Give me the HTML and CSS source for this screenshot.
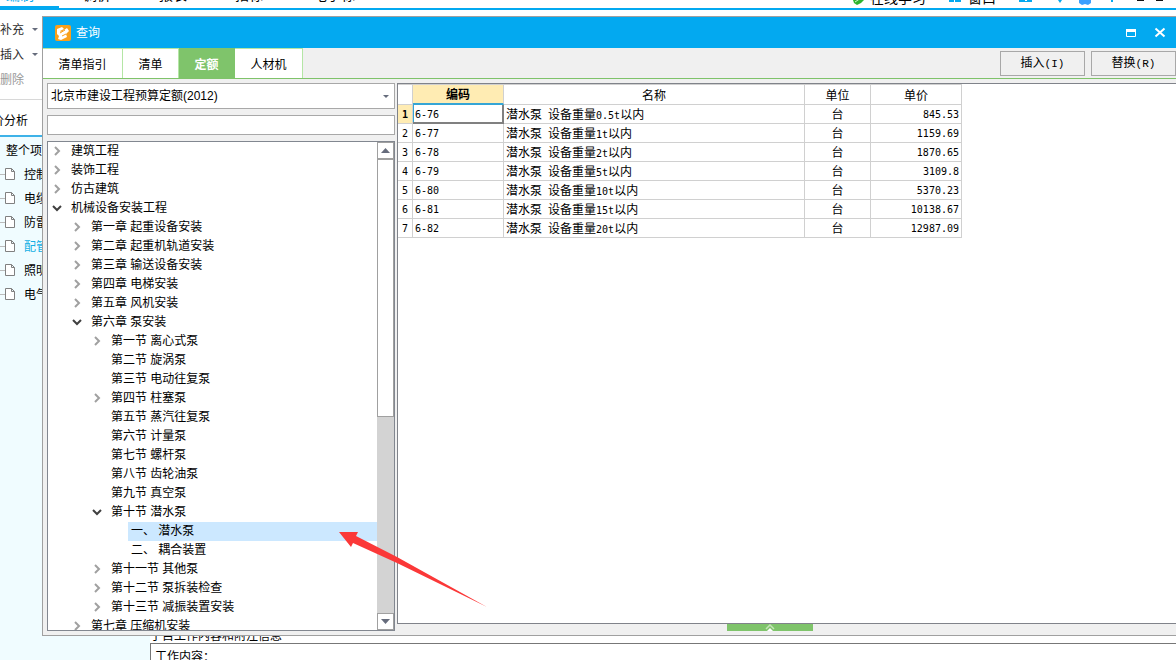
FILE: index.html
```html
<!DOCTYPE html>
<html lang="zh-CN">
<head>
<meta charset="utf-8">
<title>查询</title>
<link rel="stylesheet" href="styles.css">
</head>
<body>
<svg class="defs" aria-hidden="true">
  <symbol id="closed" viewBox="0 0 14 14"><path d="M4 2l4 4-4 4" fill="none" stroke="#a0a0a0" stroke-width="2"/></symbol>
  <symbol id="open" viewBox="0 0 14 14"><path d="M2 4l4 4 4-4" fill="none" stroke="#404040" stroke-width="2"/></symbol>
  <symbol id="doc" viewBox="0 0 10 12"><path d="M.5.5h6l3 3v8h-9zM6.500.5v3h3" fill="#fff" stroke="#808080"/></symbol>
  <symbol id="down" viewBox="0 0 6 3"><path d="M0 0h6L3 3z" fill="#666c7c"/></symbol>
</svg>
<div class="app">
  <header class="menubar">
    <nav class="menus">
      <a class="menu active" href="#">编制</a>
      <a class="menu" href="#">调价</a>
      <a class="menu" href="#">报表</a>
      <a class="menu" href="#">指标</a>
      <a class="menu wide" href="#">电子标</a>
    </nav>
    <div class="tools">
      <a class="tool learn" href="#"><svg width="12" height="8" viewBox="0 0 12 8"><path d="M0 2l3-2h8v2L8 5 4 7 1 5z" fill="#2fb52f"/><path d="M2 4l6-4" stroke="#d5f5d5"/></svg>在线学习</a>
      <a class="tool window" href="#"><svg width="12" height="7" viewBox="0 0 12 7"><path d="M0 0h5v3H0zM6 0h6v3H6z" fill="#03a9f0"/></svg>窗口</a>
      <svg class="status" width="146" height="8" viewBox="0 0 146 8"><path d="M0 0h13v2H0z" fill="#03a9f0"/><path d="M6 0h2v1H6z" fill="#fff"/><path d="M39 0h4l-2 3zM92 0h2v2h-2z" fill="#03a9f0"/><path d="M60 0h12v3l-3 2-3-1-3 1-3-2z" fill="#3ba0ff"/><path d="M118 0h7v1h-7zM137 0h7v1h-7z" fill="#111"/></svg>
    </div>
  </header>
  <div class="workspace">
    <aside class="side">
      <div class="edit">
        <button class="edit-button">补充<svg width="6" height="3"><use href="#down"/></svg></button>
        <button class="edit-button">插入<svg width="6" height="3"><use href="#down"/></svg></button>
        <button class="edit-button" disabled>删除</button>
      </div>
      <div class="analysis">价分析</div>
      <ul class="project">
        <li class="root">整个项目</li>
        <li><i></i><svg width="10" height="12"><use href="#doc"/></svg>控制</li>
        <li><i></i><svg width="10" height="12"><use href="#doc"/></svg>电缆</li>
        <li><i></i><svg width="10" height="12"><use href="#doc"/></svg>防雷</li>
        <li class="current"><i></i><svg width="10" height="12"><use href="#doc"/></svg>配管</li>
        <li><i></i><svg width="10" height="12"><use href="#doc"/></svg>照明</li>
        <li><i></i><svg width="10" height="12"><use href="#doc"/></svg>电气</li>
      </ul>
    </aside>
    <main class="notes">
      <h2 class="notes-title">子目工作内容和附注信息</h2>
      <div class="notes-text">工作内容：</div>
    </main>
  </div>

  <section class="dialog" role="dialog" aria-labelledby="title">
    <header class="titlebar">
      <svg width="16" height="16" viewBox="0 0 16 16"><rect width="16" height="16" rx="2" fill="#f9a01b"/><path d="M2 4l5-2 2 2-4 2 1 1 6-4 2 3-3 3 1 3-6 3-3-1 1-3-2-2z" fill="#fff"/><path d="M5 8l5-3M7 11l4-2" stroke="#f9a01b"/></svg>
      <h1 id="title">查询</h1>
      <button class="window-button" aria-label="最大化"><svg width="12" height="12" viewBox="0 0 12 12"><path d="M1.500 2.500h9v7h-9z" fill="none" stroke="#fff"/><path d="M1 2h10v3H1z" fill="#fff"/></svg></button>
      <button class="window-button" aria-label="关闭"><svg width="12" height="12" viewBox="0 0 12 12"><path d="M1.500 1.500l9 8M10.500 1.500l-9 8" stroke="#fff" stroke-width="2"/></svg></button>
    </header>
    <div class="toolbar">
      <div class="tabs" role="tablist">
        <button class="tab tab-large" role="tab">清单指引</button>
        <button class="tab" role="tab">清单</button>
        <button class="tab selected" role="tab" aria-selected="true">定额</button>
        <button class="tab tab-medium" role="tab">人材机</button>
      </div>
      <button class="action">插入<span class="key">(I)</span></button>
      <button class="action">替换<span class="key">(R)</span></button>
    </div>
    <div class="content">
      <div class="finder">
        <div class="combo">
          <select aria-label="定额库"><option>北京市建设工程预算定额(2012)</option></select>
          <svg width="6" height="3"><use href="#down"/></svg>
        </div>
        <input class="search" type="text" aria-label="查找">
        <div class="tree-box">
          <ul class="tree" role="tree">
            <li><svg><use href="#closed"/></svg><span>建筑工程</span></li>
            <li><svg><use href="#closed"/></svg><span>装饰工程</span></li>
            <li><svg><use href="#closed"/></svg><span>仿古建筑</span></li>
            <li><svg><use href="#open"/></svg><span>机械设备安装工程</span></li>
            <li class="level1"><svg><use href="#closed"/></svg><span>第一章 起重设备安装</span></li>
            <li class="level1"><svg><use href="#closed"/></svg><span>第二章 起重机轨道安装</span></li>
            <li class="level1"><svg><use href="#closed"/></svg><span>第三章 输送设备安装</span></li>
            <li class="level1"><svg><use href="#closed"/></svg><span>第四章 电梯安装</span></li>
            <li class="level1"><svg><use href="#closed"/></svg><span>第五章 风机安装</span></li>
            <li class="level1"><svg><use href="#open"/></svg><span>第六章 泵安装</span></li>
            <li class="level2"><svg><use href="#closed"/></svg><span>第一节 离心式泵</span></li>
            <li class="level2"><svg></svg><span>第二节 旋涡泵</span></li>
            <li class="level2"><svg></svg><span>第三节 电动往复泵</span></li>
            <li class="level2"><svg><use href="#closed"/></svg><span>第四节 柱塞泵</span></li>
            <li class="level2"><svg></svg><span>第五节 蒸汽往复泵</span></li>
            <li class="level2"><svg></svg><span>第六节 计量泵</span></li>
            <li class="level2"><svg></svg><span>第七节 螺杆泵</span></li>
            <li class="level2"><svg></svg><span>第八节 齿轮油泵</span></li>
            <li class="level2"><svg></svg><span>第九节 真空泵</span></li>
            <li class="level2"><svg><use href="#open"/></svg><span>第十节 潜水泵</span></li>
            <li class="level3 selected"><svg></svg><span>一、 潜水泵</span></li>
            <li class="level3"><svg></svg><span>二、 耦合装置</span></li>
            <li class="level2"><svg><use href="#closed"/></svg><span>第十一节 其他泵</span></li>
            <li class="level2"><svg><use href="#closed"/></svg><span>第十二节 泵拆装检查</span></li>
            <li class="level2"><svg><use href="#closed"/></svg><span>第十三节 减振装置安装</span></li>
            <li class="level1"><svg><use href="#closed"/></svg><span>第七章 压缩机安装</span></li>
          </ul>
          <div class="scrollbar">
            <button class="scroll-button" aria-label="向上"><svg width="9" height="5" viewBox="0 0 9 5"><path d="M0 5h9L4.500 0z" fill="#666c7c"/></svg></button>
            <div class="thumb"></div>
            <div class="track"></div>
            <button class="scroll-button" aria-label="向下"><svg width="9" height="5" viewBox="0 0 9 5"><path d="M0 0h9L4.500 5z" fill="#666c7c"/></svg></button>
          </div>
        </div>
      </div>
      <div class="results">
        <div class="grid">
          <table>
            <colgroup><col class="c-index"><col class="c-code"><col class="c-name"><col class="c-unit"><col class="c-price"></colgroup>
            <thead><tr><th></th><th class="sorted">编码</th><th>名称</th><th>单位</th><th>单价</th></tr></thead>
            <tbody>
              <tr class="active-row"><th>1</th><td class="code cell-focus">6-76</td><td>潜水泵<span class="num"> </span>设备重量<span class="num">0.5t</span>以内</td><td class="unit">台</td><td class="price">845.53</td></tr>
              <tr><th>2</th><td class="code">6-77</td><td>潜水泵<span class="num"> </span>设备重量<span class="num">1t</span>以内</td><td class="unit">台</td><td class="price">1159.69</td></tr>
              <tr><th>3</th><td class="code">6-78</td><td>潜水泵<span class="num"> </span>设备重量<span class="num">2t</span>以内</td><td class="unit">台</td><td class="price">1870.65</td></tr>
              <tr><th>4</th><td class="code">6-79</td><td>潜水泵<span class="num"> </span>设备重量<span class="num">5t</span>以内</td><td class="unit">台</td><td class="price">3109.8</td></tr>
              <tr><th>5</th><td class="code">6-80</td><td>潜水泵<span class="num"> </span>设备重量<span class="num">10t</span>以内</td><td class="unit">台</td><td class="price">5370.23</td></tr>
              <tr><th>6</th><td class="code">6-81</td><td>潜水泵<span class="num"> </span>设备重量<span class="num">15t</span>以内</td><td class="unit">台</td><td class="price">10138.67</td></tr>
              <tr><th>7</th><td class="code">6-82</td><td>潜水泵<span class="num"> </span>设备重量<span class="num">20t</span>以内</td><td class="unit">台</td><td class="price">12987.09</td></tr>
            </tbody>
          </table>
        </div>
        <button class="expander" aria-label="展开"><svg width="10" height="7" viewBox="0 0 10 7"><path d="M1 5l4-4 4 4" fill="none" stroke="#c5e5b8" stroke-width="1.500"/><path d="M2 7l3-3 3 3z" fill="#fff"/></svg></button>
      </div>
    </div>
  </section>
  <svg class="pointer" width="148" height="76" viewBox="0 0 148 76" aria-hidden="true"><path d="M0 1h19l-2 4 41 21 90 50-90-44-44-20-2 4z" fill="#fb3838"/></svg>
</div>
</body>
</html>
```
FILE: styles.css
```css
* { box-sizing: border-box; }

body {
  margin: 0;
  overflow: hidden;
  background: #fff;
  color: #000;
  font: 12px/18px "Liberation Sans", "Noto Sans CJK SC", sans-serif;
}

button, input, select {
  font: inherit;
  color: inherit;
  margin: 0;
  padding: 0;
  border: 0;
  border-radius: 0;
  background: none;
}

a { color: inherit; text-decoration: none; }
ul { list-style: none; margin: 0; padding: 0; }
h1, h2 { margin: 0; font: inherit; }
.defs { display: none; }

.app {
  position: relative;
  display: flex;
  flex-direction: column;
  height: 100vh;
}

/* Main window */
.menubar {
  display: flex;
  justify-content: space-between;
  align-items: flex-end;
  height: 10px;
  overflow: hidden;
  border-bottom: 2px solid #03a9f0;
  font-size: 14px;
  line-height: 16px;
}
.menus, .tools { display: flex; align-items: flex-end; }
.menu { width: 76px; padding: 0 0 5px 6px; }
.menu.active { width: 59px; margin-right: 18px; padding: 0 0 3px 6px; border-bottom: 2px solid #03a9f0; color: #03a9f0; }
.menu.wide { width: 90px; padding-left: 8px; }
.tool { display: flex; align-items: flex-end; gap: 5px; height: 20px; padding-bottom: 2px; }
.tool.learn { width: 96px; }
.tool.window { width: 70px; gap: 7px; }
.status { margin-right: 11px; }

.workspace { flex: 1; display: flex; min-height: 0; }
.side { width: 150px; display: flex; flex-direction: column; }
.edit { padding: 7px 0 7px; border-bottom: 1px solid #d8d8d8; }
.edit-button { display: flex; align-items: center; gap: 8px; height: 25px; color: #303030; }
.edit-button:disabled { color: #999; }
.analysis { height: 37px; padding-top: 12px; border-bottom: 2px solid #3db2e8; text-indent: -8px; }
.project { flex: 1; background: #f0fcff; padding-top: 2px; }
.project li { display: flex; align-items: center; height: 24px; }
.project .root { padding-left: 6px; }
.project i { width: 5px; height: 1px; margin-bottom: 2px; background: #bbb; }
.project svg { margin: 0 9px 3px 0; }
.project .current { color: #14b0e4; }
.notes { flex: 1; display: flex; flex-direction: column; justify-content: flex-end; }
.notes-title { height: 17px; line-height: 20px; }
.notes-text { height: 17px; padding: 4px; border-top: 1px solid #777; border-left: 1px solid #777; overflow: hidden; }

/* Query dialog */
.dialog {
  position: absolute;
  inset: 16px 0 24px 42px;
  display: flex;
  flex-direction: column;
  background: #f0f0f0;
  border: 1px solid #a0a0a0;
  border-right: 0;
}
.titlebar {
  display: flex;
  align-items: center;
  height: 31px;
  padding: 0 10px 0 12px;
  background: #03a9f0;
  color: #fff;
}
.titlebar h1 { flex: 1; padding-left: 5px; }
.window-button { display: flex; margin-left: 17px; }

.toolbar {
  display: flex;
  align-items: center;
  gap: 6px;
  height: 31px;
  border-bottom: 1px solid #7fc36a;
}
.tabs { flex: 1; display: flex; height: 30px; }
.tab { width: 56px; padding-top: 3px; border: 1px solid #b4e6a5; border-width: 1px 1px 0 0; background: #fff; }
.tab-large { width: 80px; }
.tab-medium { width: 68px; }
.tab.selected { background: #7fc46b; border-color: #7fc46b; color: #fff; font-weight: bold; }
.action { width: 85px; height: 25px; border: 1px solid #a8a8a8; }
.key { font: 11px/16px "Liberation Mono", monospace; }

.content { flex: 1; display: flex; gap: 2px; min-height: 0; padding: 4px 0 4px 4px; }
.finder { width: 348px; display: flex; flex-direction: column; gap: 6px; }
.combo { display: grid; align-items: center; height: 26px; border: 1px solid #a8a8a8; background: #fff; }
.combo select { grid-area: 1 / 1; width: 100%; height: 24px; padding-left: 3px; appearance: none; }
.combo svg { grid-area: 1 / 1; justify-self: end; margin-right: 5px; pointer-events: none; }
.search { height: 20px; border: 1px solid #a8a8a8; background: #fff; }
.tree-box { flex: 1; display: flex; min-height: 0; border: 1px solid #828790; background: #fff; }
.tree { flex: 1; overflow: hidden; }
.tree li { display: flex; align-items: center; height: 19px; padding-left: 3px; }
.tree svg { width: 14px; height: 14px; flex: none; }
.tree span { flex: 1; margin-left: 3px; padding-left: 3px; line-height: 19px; white-space: nowrap; }
.tree .level1 { padding-left: 23px; }
.tree .level2 { padding-left: 43px; }
.tree .level3 { padding-left: 63px; }
.tree .selected span { background: #cce8ff; }
.scrollbar { width: 17px; display: flex; flex-direction: column; background: #d3d3d3; }
.scroll-button { display: flex; align-items: center; justify-content: center; height: 17px; border: 1px solid #a0a0a0; background: #fff; }
.thumb { flex: 257; border: 1px solid #a0a0a0; background: #fff; }
.track { flex: 197; }

.results { flex: 1; display: flex; flex-direction: column; min-width: 0; }
.grid { flex: 1; overflow: hidden; border: 1px solid #80838a; border-right: 0; background: #fff; }
.expander { display: flex; justify-content: center; width: 86px; height: 7px; margin-left: 330px; background: #7fc46b; }

table { width: 564px; table-layout: fixed; border-collapse: separate; border-spacing: 0; border-top: 1px solid #d0d0d0; }
.c-index { width: 15px; }
.c-code { width: 91px; }
.c-name { width: 301px; }
.c-unit { width: 66px; }
.c-price { width: 91px; }
th, td { height: 19px; padding: 2px 2px 0; border: 1px solid #d0d0d0; border-width: 0 1px 1px 0; line-height: 16px; text-align: left; white-space: nowrap; font-weight: normal; }
thead th { height: 20px; text-align: center; }
thead .sorted { background: #ffecb3; border-bottom: 2px solid #35a5d5; font-weight: bold; }
tbody th, .code, .price, .num { font-family: "DejaVu Sans Mono", monospace; font-size: 10px; }
.num { line-height: 12px; }
tbody th { padding: 2px 0 0; text-align: center; }
.active-row th { background: #ffecb3; font-weight: bold; }
.cell-focus { padding-bottom: 0; border-right: 2px solid #808080; border-bottom: 2px solid #808080; box-shadow: inset 1px 0 #35a5d5; line-height: 15px; }
.unit { text-align: center; }
.price { text-align: right; }

.pointer { position: absolute; left: 339px; top: 531px; }
```
